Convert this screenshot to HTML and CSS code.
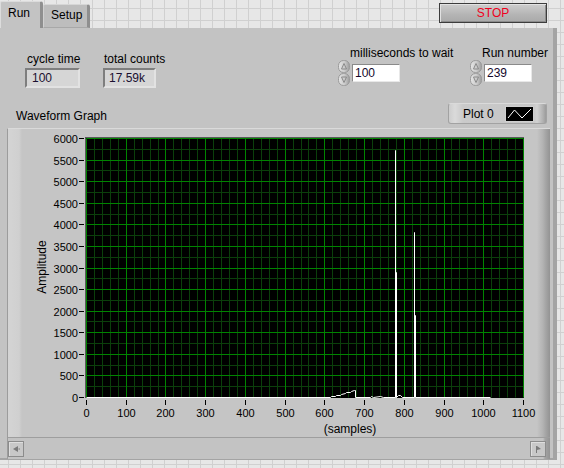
FILE: index.html
```html
<!DOCTYPE html>
<html>
<head>
<meta charset="utf-8">
<title>Waveform</title>
<link rel="stylesheet" href="styles.css">
</head>
<body>
<div class="window">
  <div class="topbar">
    <div class="tabs">
      <div class="tab tab-active">Run</div>
      <div class="tab tab-inactive">Setup</div>
    </div>
    <div class="stop-btn">STOP</div>
  </div>
  <div class="panel">
    <div class="controls">
      <div class="ctrl ctrl-cycle">
        <div class="ctrl-label">cycle time</div>
        <div class="ind-box">100</div>
      </div>
      <div class="ctrl ctrl-total">
        <div class="ctrl-label">total counts</div>
        <div class="ind-box ind-wide">17.59k</div>
      </div>
      <div class="ctrl ctrl-ms">
        <div class="ctrl-label num-label">milliseconds to wait</div>
        <div class="num-row">
          <svg class="spin" width="12" height="26" viewBox="0 0 12 26">
            <defs>
              <linearGradient id="spg" x1="0" y1="0" x2="1" y2="0">
                <stop offset="0" stop-color="#e6e6e6"/>
                <stop offset="0.6" stop-color="#c8c8c8"/>
                <stop offset="1" stop-color="#9c9c9c"/>
              </linearGradient>
            </defs>
            <rect x="0.5" y="0.5" width="11" height="12" rx="5" fill="url(#spg)" stroke="#9a9a9a"/>
            <rect x="0.5" y="13.5" width="11" height="12" rx="5" fill="url(#spg)" stroke="#9a9a9a"/>
            <path d="M3.5 9 L6 3.5 L8.5 9 Z" fill="none" stroke="#8a8a8a"/>
            <path d="M3.5 17 L6 22.5 L8.5 17 Z" fill="none" stroke="#8a8a8a"/>
          </svg>
          <div class="num-box">100</div>
        </div>
      </div>
      <div class="ctrl ctrl-run">
        <div class="ctrl-label num-label">Run number</div>
        <div class="num-row">
          <svg class="spin" width="12" height="26" viewBox="0 0 12 26">
            <rect x="0.5" y="0.5" width="11" height="12" rx="5" fill="url(#spg)" stroke="#9a9a9a"/>
            <rect x="0.5" y="13.5" width="11" height="12" rx="5" fill="url(#spg)" stroke="#9a9a9a"/>
            <path d="M3.5 9 L6 3.5 L8.5 9 Z" fill="none" stroke="#8a8a8a"/>
            <path d="M3.5 17 L6 22.5 L8.5 17 Z" fill="none" stroke="#8a8a8a"/>
          </svg>
          <div class="num-box">239</div>
        </div>
      </div>
    </div>

    <div class="graph-head">
      <div class="graph-label">Waveform Graph</div>
      <div class="legend">
        <span class="legend-text">Plot 0</span>
        <svg class="legend-swatch" width="29" height="16" viewBox="0 0 29 16">
          <rect x="0.5" y="0.5" width="28" height="15" fill="#000" stroke="#cfcfcf"/>
          <path d="M3 12 L9.5 4 L17 12 L26 3" fill="none" stroke="#fff" stroke-width="1"/>
        </svg>
      </div>
    </div>

    <div class="graph-frame">
      <svg class="graph-svg" width="542" height="309" viewBox="0 0 542 309">
        <rect x="77" y="9" width="439" height="261" fill="#000"/>
        <path d="M77.5 9 V270 M77 9.5 H516" stroke="#5a5a5a" stroke-width="1" fill="none"/>
        <g transform="translate(78.5,10.5)" fill="none" stroke-width="1">
          <path stroke="#0b3f0b" d="M8 0V259M16 0V259M24 0V259M32 0V259M48 0V259M56 0V259M64 0V259M72 0V259M87 0V259M95 0V259M103 0V259M111 0V259M127 0V259M135 0V259M143 0V259M151 0V259M167 0V259M175 0V259M183 0V259M191 0V259M207 0V259M215 0V259M222 0V259M230 0V259M246 0V259M254 0V259M262 0V259M270 0V259M286 0V259M294 0V259M302 0V259M310 0V259M326 0V259M334 0V259M342 0V259M350 0V259M365 0V259M373 0V259M381 0V259M389 0V259M405 0V259M413 0V259M421 0V259M429 0V259M0 11H437M0 32H437M0 54H437M0 76H437M0 97H437M0 119H437M0 140H437M0 162H437M0 183H437M0 205H437M0 227H437M0 248H437"/>
          <path stroke="#008400" d="M0 0V259M40 0V259M79 0V259M119 0V259M159 0V259M199 0V259M238 0V259M278 0V259M318 0V259M358 0V259M397 0V259M437 0V259M0 0H437M0 22H437M0 43H437M0 65H437M0 86H437M0 108H437M0 130H437M0 151H437M0 173H437M0 194H437M0 216H437M0 237H437"/>
          <path stroke="#ffffff" d="M0 259H244L245 258H249L250 257H254L255 256L259 255L260 254H264L265 253L268 252H269V259H284L285 258L287 259L294 258L297 259H309V12V259M310 259V134V259L312 257H314L316 259H328V94V259M329 259V177V259H404"/>
        </g>
        <g stroke="#000" stroke-width="1" fill="none">
          <path d="M71 10.5H76M71 32.5H76M71 53.5H76M71 75.5H76M71 96.5H76M71 118.5H76M71 140.5H76M71 161.5H76M71 183.5H76M71 204.5H76M71 226.5H76M71 247.5H76M71 269.5H76"/>
          <path d="M78.5 272V277M118.5 272V277M157.5 272V277M197.5 272V277M237.5 272V277M277.5 272V277M316.5 272V277M356.5 272V277M396.5 272V277M436.5 272V277M475.5 272V277M515.5 272V277"/>
        </g>
        <g class="axis-y" text-anchor="end">
          <text x="70" y="15">6000</text>
          <text x="70" y="37">5500</text>
          <text x="70" y="58">5000</text>
          <text x="70" y="80">4500</text>
          <text x="70" y="101">4000</text>
          <text x="70" y="123">3500</text>
          <text x="70" y="145">3000</text>
          <text x="70" y="166">2500</text>
          <text x="70" y="188">2000</text>
          <text x="70" y="209">1500</text>
          <text x="70" y="231">1000</text>
          <text x="70" y="252">500</text>
          <text x="70" y="274">0</text>
        </g>
        <g class="axis-x" text-anchor="middle">
          <text x="78.5" y="289">0</text>
          <text x="118.5" y="289">100</text>
          <text x="157.5" y="289">200</text>
          <text x="197.5" y="289">300</text>
          <text x="237.5" y="289">400</text>
          <text x="277.5" y="289">500</text>
          <text x="316.5" y="289">600</text>
          <text x="356.5" y="289">700</text>
          <text x="396.5" y="289">800</text>
          <text x="436.5" y="289">900</text>
          <text x="475.5" y="289">1000</text>
          <text x="515.5" y="289">1100</text>
        </g>
        <text class="axis-name" x="342" y="305" text-anchor="middle">(samples)</text>
        <text class="axis-name" x="0" y="0" text-anchor="middle" transform="translate(38,139) rotate(-90)">Amplitude</text>
      </svg>
      <div class="scrollbar">
        <div class="sb-btn">
          <svg width="14" height="14" viewBox="0 0 14 14">
            <path d="M4 7 L9 4 V10 Z" fill="#7a7a7a"/>
            <path d="M9.5 7 H11" stroke="#7a7a7a"/>
          </svg>
        </div>
        <div class="sb-btn">
          <svg width="14" height="14" viewBox="0 0 14 14">
            <path d="M5.5 4 V11" stroke="#7a7a7a"/>
            <path d="M6 4 L10 7 L6 8 Z" fill="#7a7a7a"/>
          </svg>
        </div>
      </div>
    </div>
  </div>
</div>
</body>
</html>
```

FILE: styles.css
```css
* { box-sizing: border-box; }

html, body {
  margin: 0;
  padding: 0;
}

body {
  width: 564px;
  height: 468px;
  overflow: hidden;
  font-family: "Liberation Sans", Arial, sans-serif;
  font-size: 12px;
  color: #000;
  background-color: #e7e7e7;
  background-image:
    linear-gradient(to right, #d0d0d0 1px, transparent 1px),
    linear-gradient(to bottom, #d0d0d0 1px, transparent 1px);
  background-size: 12px 12px;
  background-position: 8px 8px;
}

.window {
  width: 564px;
}

/* ---------- top bar ---------- */
.topbar {
  display: flex;
  justify-content: space-between;
  align-items: flex-start;
  height: 28px;
}

.tabs {
  display: flex;
  align-items: flex-end;
  height: 28px;
}

.tab {
  font-size: 12px;
  line-height: 14px;
  white-space: nowrap;
}

.tab-active {
  width: 43px;
  height: 27px;
  background: #c3c3c3;
  border-top: 1px solid #dcdcdc;
  border-left: 1px solid #dcdcdc;
  border-right: 3px solid #8f8f8f;
  border-radius: 2px 3px 0 0;
  padding: 4px 0 0 7px;
}

.tab-inactive {
  width: 47px;
  height: 24px;
  background: #bdbdbd;
  border-top: 1px solid #d6d6d6;
  border-left: 1px solid #d0d0d0;
  border-right: 3px solid #8f8f8f;
  border-bottom: 1px solid #a8a8a8;
  border-radius: 2px 3px 0 0;
  padding: 3px 0 0 7px;
}

.stop-btn {
  margin: 3px 17px 0 0;
  width: 108px;
  height: 20px;
  border: 1px solid #3c3c3c;
  background: linear-gradient(#cdcdcd, #b4b4b4 60%, #a9a9a9);
  box-shadow: inset 1px 1px 0 #e2e2e2, inset -1px -1px 0 #8c8c8c;
  color: #f0001c;
  text-align: center;
  line-height: 18px;
  font-size: 12px;
}

/* ---------- panel ---------- */
.panel {
  width: 557px;
  height: 432px;
  background: #c3c3c3;
  border-right: 4px solid #a4a4a4;
  border-bottom: 2px solid #a4a4a4;
}

.controls {
  display: flex;
  align-items: flex-start;
  height: 72px;
}

.ctrl {
  flex-shrink: 0;
  white-space: nowrap;
}

.ctrl-label {
  line-height: 14px;
  height: 14px;
}

.ctrl-cycle {
  margin: 24px 0 0 25px;
  width: 55px;
}
.ctrl-cycle .ctrl-label { margin-left: 2px; }

.ctrl-total {
  margin: 24px 0 0 23px;
  width: 64px;
}
.ctrl-total .ctrl-label { margin-left: 1px; }

.ind-box {
  margin-top: 2px;
  width: 55px;
  height: 20px;
  background: #d6d6d6;
  border: 2px solid;
  border-color: #7e7e7e #e2e2e2 #e2e2e2 #7e7e7e;
  line-height: 16px;
  padding-left: 5px;
  color: #1a1030;
}

.ind-wide {
  width: 53px;
  padding-left: 4px;
}

.ctrl-ms {
  margin: 18px 0 0 171px;
  width: 117px;
}

.ctrl-run {
  margin: 18px 0 0 15px;
  width: 80px;
}

.num-label {
  margin-left: 12px;
}

.num-row {
  display: flex;
  align-items: center;
  height: 26px;
}

.spin {
  display: block;
  flex-shrink: 0;
}

.num-box {
  margin-left: 2px;
  width: 48px;
  height: 18px;
  background: #fff;
  border: 1px solid;
  border-color: #8a8a8a #e8e8e8 #e8e8e8 #8a8a8a;
  line-height: 16px;
  padding-left: 2px;
  color: #14082c;
}

/* ---------- graph ---------- */
.graph-head {
  display: flex;
  align-items: flex-start;
  height: 28px;
}

.graph-label {
  margin: 9px 0 0 16px;
  line-height: 14px;
  white-space: nowrap;
}

.legend {
  margin: 3px 6px 0 auto;
  width: 99px;
  height: 21px;
  display: flex;
  align-items: center;
  padding-left: 14px;
  border: 1px solid #a2a2a2;
  border-top-color: #dadada;
  border-radius: 3px;
  background: linear-gradient(to right, #cdcdcd 0, #dadada 6px, #cacaca 14px, #c6c6c6 84px, #d2d2d2 88px, #b0b0b0 94px, #8e8e8e 99px);
}

.legend-text {
  line-height: 14px;
}

.legend-swatch {
  display: block;
  margin-left: 11px;
}

.graph-frame {
  margin-left: 7px;
  width: 543px;
  height: 331px;
  border-left: 1px solid #9c9c9c;
  border-top: 1px solid #dadada;
  background: linear-gradient(to right, #d4d4d4 0, #d0d0d0 11px, #c5c5c5 14px, #c5c5c5 529px, #b2b2b2 535px, #a8a8a8 537px, #939393 542px);
}

.graph-svg {
  display: block;
  margin-top: -1px;
}

.graph-svg text {
  font-family: "Liberation Sans", Arial, sans-serif;
  font-size: 11px;
  fill: #000;
}

.graph-svg .axis-name {
  font-size: 12px;
}

.scrollbar {
  height: 22px;
  border-top: 1px solid #9e9e9e;
  background: linear-gradient(to right, #c3c3c3 0, #c3c3c3 535px, #a4a4a4 537px, #939393 542px);
  display: flex;
  justify-content: space-between;
  align-items: flex-start;
  padding: 3px 4px 0 0;
}

.sb-btn {
  width: 16px;
  height: 16px;
  border: 1px solid #8c8c8c;
  background: #c8c8c8;
  box-shadow: inset 1px 1px 0 #dedede;
}

.sb-btn svg {
  display: block;
}
```
